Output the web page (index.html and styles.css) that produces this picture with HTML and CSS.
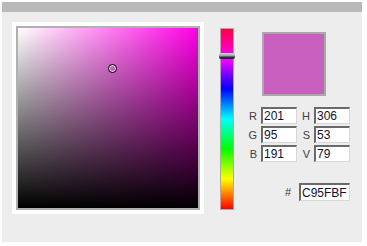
FILE: index.html
```html
<!DOCTYPE html>
<html lang="en">
<head>
    <meta charset="UTF-8">
    <title>Color Picker</title>
    <link rel="stylesheet" href="styles.css">
</head>
<body>
    <div class="window">
        <div class="titlebar"></div>
        <div class="panel">
            <div class="sv-frame">
                <div class="sv-box">
                    <div class="sv-marker"></div>
                </div>
            </div>

            <div class="hue-bar">
                <div class="hue-thumb"></div>
            </div>

            <div class="values">
                <div class="swatch"></div>
                <div class="fields">
                    <label class="field-label">R</label>
                    <input class="field" type="text" value="201">
                    <label class="field-label">H</label>
                    <input class="field" type="text" value="306">
                    <label class="field-label">G</label>
                    <input class="field" type="text" value="95">
                    <label class="field-label">S</label>
                    <input class="field" type="text" value="53">
                    <label class="field-label">B</label>
                    <input class="field" type="text" value="191">
                    <label class="field-label">V</label>
                    <input class="field" type="text" value="79">
                </div>
                <div class="hex-row">
                    <label class="field-label">#</label>
                    <input class="field hex" type="text" value="C95FBF">
                </div>
            </div>
        </div>
    </div>
</body>
</html>
```

FILE: styles.css
```css
* {
    margin: 0;
    padding: 0;
    box-sizing: border-box;
}

body {
    background: white;
    padding: 2px;
    font-family: 'Liberation Sans', Arial, sans-serif;
}

.window {
    width: 360px;
}

.titlebar {
    height: 10px;
    background: #b9b9b9;
}

.panel {
    height: 230px;
    background: #ededed;
    padding: 10px;
    display: flex;
    align-items: flex-start;
}

.sv-frame {
    width: 192px;
    height: 192px;
    background: white;
    padding: 4px;
}

.sv-box {
    position: relative;
    width: 184px;
    height: 184px;
    border: 2px solid #b0b0b0;
    background:
        linear-gradient(to top, #000 0%, rgba(0, 0, 0, 0) 100%),
        linear-gradient(to right, #fff 0%, #ff00e6 100%);
}

.sv-marker {
    position: absolute;
    left: 90px;
    top: 36px;
    width: 9px;
    height: 9px;
    border: 1px solid #000;
    border-radius: 50%;
    box-shadow: inset 0 0 0 1px #fff;
}

.hue-bar {
    position: relative;
    width: 14px;
    height: 182px;
    margin-top: 6px;
    margin-left: 16px;
    border: 1px solid #aaa;
    background: linear-gradient(to bottom,
        #ff0040 0%, #ff00ff 16.6%, #0000ff 33.3%, #00ffff 50%,
        #00ff00 66.6%, #ffff00 83.3%, #ff0000 100%);
}

.hue-thumb {
    position: absolute;
    left: -2px;
    top: 24px;
    width: 16px;
    height: 6px;
    border-radius: 2px;
    background: linear-gradient(to bottom, #d0d6dc 0%, #9aa4ae 45%, #2a3038 70%, #1c2228 100%);
}

.values {
    width: 104px;
    margin-left: 12px;
    display: flex;
    flex-direction: column;
}

.swatch {
    width: 64px;
    height: 64px;
    margin-top: 10px;
    margin-left: 16px;
    border: 2px solid #a8a8a8;
    background: #c95fbf;
}

.fields {
    margin-top: 11px;
    display: grid;
    grid-template-columns: 15px 36px 17px 36px;
    row-gap: 2px;
    align-items: center;
}

.field-label {
    font-size: 11px;
    color: #404040;
    text-align: right;
    padding-right: 4px;
}

.field {
    width: 36px;
    height: 17px;
    font-family: 'Liberation Sans', Arial, sans-serif;
    font-size: 12px;
    color: #101030;
    background: white;
    border-style: solid;
    border-width: 2px 1px 1px 2px;
    border-color: #6a6a6a #d8d8d8 #d8d8d8 #6a6a6a;
    padding: 0 1px;
    outline: none;
}

.hex-row {
    margin-top: 21px;
    display: flex;
    justify-content: flex-end;
    align-items: center;
}

.hex-row .field-label {
    padding-right: 8px;
}

.field.hex {
    width: 51px;
    height: 18px;
}
```
